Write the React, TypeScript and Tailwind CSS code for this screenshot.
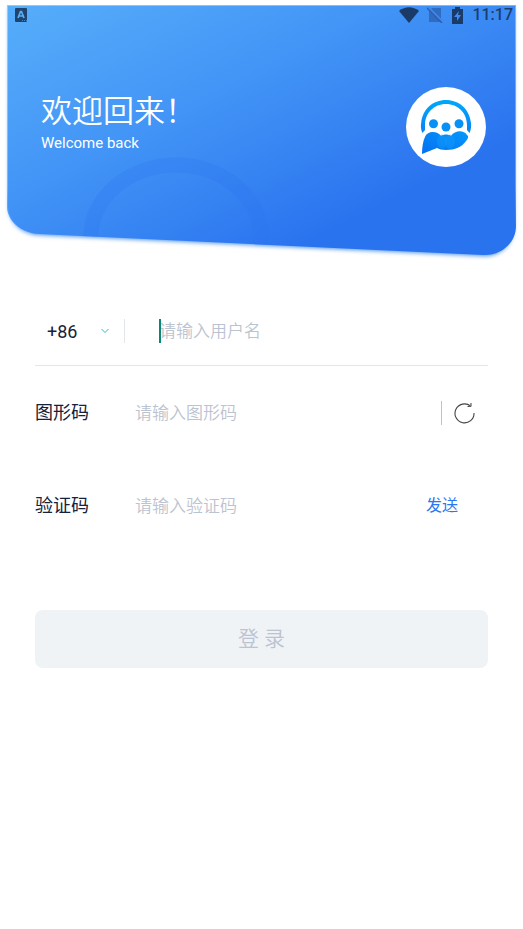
import { useState } from "react";

function HeaderShape() {
  return (
    <svg
      className="absolute inset-0 h-full w-full"
      viewBox="0 0 523 264"
      preserveAspectRatio="none"
      aria-hidden="true"
    >
      <defs>
        <linearGradient id="sky" gradientUnits="userSpaceOnUse" x1="7" y1="5" x2="165" y2="316">
          <stop offset="0" stopColor="#57aefa" />
          <stop offset="0.5" stopColor="#4294f6" />
          <stop offset="1" stopColor="#2a73ef" />
        </linearGradient>
        <linearGradient id="edge" gradientUnits="userSpaceOnUse" x1="0" y1="5" x2="0" y2="230">
          <stop offset="0" stopColor="#fff" stopOpacity="0.35" />
          <stop offset="0.8" stopColor="#fff" stopOpacity="0.3" />
          <stop offset="1" stopColor="#fff" stopOpacity="0" />
        </linearGradient>
        <filter id="glow" x="-5%" y="-5%" width="110%" height="112%">
          <feGaussianBlur stdDeviation="2" />
        </filter>
        <clipPath id="card">
          <path d="M7 5H516V226C516 243 501 256 483 255L39 234C21 233 7 221 7 206Z" />
        </clipPath>
      </defs>
      <path
        d="M9 7H514V226C514 243 501 257 483 256L39 235C21 234 9 222 9 207Z"
        fill="#4b93f8"
        filter="url(#glow)"
      />
      <path d="M0 0H523V5H0Z" fill="#fff" />
      <g clipPath="url(#card)">
        <path d="M0 0H523V264H0Z" fill="url(#sky)" />
        <ellipse cx="176" cy="237" rx="85" ry="72" fill="none" stroke="#2a73ef" strokeOpacity="0.25" strokeWidth="15" />
        <path
          d="M7 5H516V226C516 243 501 256 483 255L39 234C21 233 7 221 7 206Z"
          fill="none"
          stroke="url(#edge)"
          strokeWidth="2"
        />
      </g>
    </svg>
  );
}

function StatusBar() {
  return (
    <div className="relative flex h-[30px] items-center justify-between pr-[10px] pl-[15px] text-[#1c3d6e]">
      <svg width="13" height="14" viewBox="0 0 13 14" aria-hidden="true">
        <rect width="12" height="14" rx="1" fill="#1f446e" />
        <path d="M3 10L5.500 3.500H6.500L9 10M4 8H8" fill="none" stroke="#58aef8" strokeWidth="1.700" />
        <path d="M7 12.500H12" stroke="#58aef8" strokeOpacity="0.600" strokeDasharray="1 1" />
      </svg>
      <div className="flex items-center">
        <svg width="20" height="17" viewBox="0 0 20 17" aria-hidden="true">
          <path d="M0 4C6-1 14-1 20 4L10 16Z" fill="#1a3b68" />
        </svg>
        <svg className="ml-2" width="16" height="16" viewBox="0 0 16 16" aria-hidden="true">
          <path d="M5 1H14V15H2V4Z" fill="#2f6cc0" />
          <path d="M1 0L16 15" stroke="#3f87f1" strokeWidth="2" />
          <path d="M0 1L15 16" stroke="#2a60ab" strokeWidth="1.500" />
        </svg>
        <svg className="ml-2" width="13" height="17" viewBox="0 0 13 17" aria-hidden="true">
          <path d="M1 2H4V0H9V2H12V17H1Z" fill="#1a3b68" />
          <path d="M8 4L3 10H6V14L10 8H7Z" fill="#4088f3" />
        </svg>
        <time className="ml-2 font-['Roboto',sans-serif] text-base leading-5 font-medium">11:17</time>
      </div>
    </div>
  );
}

function Logo() {
  return (
    <svg className="mr-[37px] shrink-0" width="80" height="80" viewBox="0 0 80 80" role="img" aria-label="Logo">
      <defs>
        <linearGradient id="ring" x1="0" y1="0" x2="0" y2="1">
          <stop offset="0" stopColor="#00a8fb" />
          <stop offset="1" stopColor="#0784f5" />
        </linearGradient>
        <linearGradient id="body" x1="0" y1="1" x2="1" y2="0">
          <stop offset="0" stopColor="#0670f2" />
          <stop offset="1" stopColor="#0598fb" />
        </linearGradient>
      </defs>
      <circle cx="40" cy="40" r="40" fill="#fff" />
      <path
        d="M16.500 46C14.500 42 14.800 38 15.200 36C16.500 22 27 13 40 13S63.500 22 65 36C65.400 39 65 43 63.500 46L61 43V38C61 26 52 17 40 17S19 26 19 38V43Z"
        fill="url(#ring)"
      />
      <g fill="#0791f6">
        <circle cx="27.500" cy="36.800" r="4.500" />
        <circle cx="40" cy="40" r="4.500" />
        <circle cx="53" cy="36.800" r="4.500" />
      </g>
      <path
        d="M16 67C16 60 17 54 19 50C21 44 31 43 35 49C38 47 42 47 45 49C49 43 58 43 61 48C63 49 62 52 60 54C56 60 49 63 40 63C36 63 33 62 31 61C26 63 21 65 16 67Z"
        fill="url(#body)"
      />
      <ellipse cx="36" cy="54.500" rx="5" ry="7" fill="#139bfa" fillOpacity="0.450" />
      <ellipse cx="44" cy="54.500" rx="5" ry="7" fill="#139bfa" fillOpacity="0.450" />
    </svg>
  );
}

const fieldText =
  "min-w-0 flex-1 bg-transparent text-[17px] leading-6 font-[350] text-[#16213b] outline-none placeholder:text-[#bcc3d0]";

export default function App() {
  const [user, setUser] = useState("");
  const [captcha, setCaptcha] = useState("");
  const [code, setCode] = useState("");

  return (
    <main className="min-h-screen w-full bg-white pb-10 font-['Roboto','Noto_Sans_CJK_SC',sans-serif]">
      <header className="relative h-[264px]">
        <HeaderShape />
        <StatusBar />
        <div className="relative mt-[57px] flex items-start justify-between pl-[41px]">
          <div className="pt-1 text-white">
            <h1 className="text-[31px] leading-[42px] font-[350]">欢迎回来！</h1>
            <p className="text-[15px] leading-5">Welcome back</p>
          </div>
          <Logo />
        </div>
      </header>

      <form className="px-[35px] pt-[33px]" onSubmit={(e) => e.preventDefault()}>
        <div className="flex h-[69px] items-center border-b border-[#e4e6e8]">
          <div className="relative flex h-6 w-[90px] items-center border-r border-[#e4e7ea]">
            <select
              aria-label="国家区号"
              className="w-full appearance-none bg-transparent pt-[2px] pl-3 text-[18px] leading-6 text-[#16213b] outline-none"
            >
              <option>+86</option>
            </select>
            <svg
              className="pointer-events-none absolute right-[15px]"
              width="8"
              height="6"
              viewBox="0 0 8 6"
              aria-hidden="true"
            >
              <path d="M0.500 1L4 4.500L7.500 1" fill="none" stroke="#35b8c8" />
            </svg>
          </div>
          <div className="relative ml-[34px] flex h-6 flex-1 items-center">
            <span className="absolute left-0 h-6 w-[2px] bg-[#07897a]" aria-hidden="true" />
            <input
              aria-label="用户名"
              className={fieldText}
              placeholder="请输入用户名"
              value={user}
              onChange={(e) => setUser(e.target.value)}
            />
          </div>
        </div>

        <div className="flex h-[93px] items-center">
          <label htmlFor="captcha" className="w-[100px] text-[18px] leading-6 text-[#16213b]">
            图形码
          </label>
          <input
            id="captcha"
            className={fieldText}
            placeholder="请输入图形码"
            value={captcha}
            onChange={(e) => setCaptcha(e.target.value)}
          />
          <div className="flex h-6 items-center border-l border-[#bfc1c4] pr-3 pl-3">
            <button type="button" aria-label="刷新图形码">
              <svg width="22" height="22" viewBox="0 0 22 22" fill="none" stroke="#444" aria-hidden="true">
                <path d="M20 11A9.500 9.500 0 1 1 16.500 4" strokeWidth="1.100" />
                <path d="M17 1V4.500H13.500" strokeWidth="1" />
                <path d="M17 2L14.500 4.500H17Z" fill="#777" stroke="none" />
              </svg>
            </button>
          </div>
        </div>

        <div className="flex h-[93px] items-center">
          <label htmlFor="code" className="w-[100px] text-[18px] leading-6 text-[#16213b]">
            验证码
          </label>
          <input
            id="code"
            className={fieldText}
            placeholder="请输入验证码"
            value={code}
            onChange={(e) => setCode(e.target.value)}
          />
          <button type="button" className="mr-[30px] text-base leading-6 text-[#2a77f3]">
            发送
          </button>
        </div>

        <button
          type="submit"
          className="mt-[58px] h-[58px] w-full rounded-lg bg-[#eff3f6] pt-[2px] text-[21px] font-[350] text-[#bcc3d0]"
        >
          登 录
        </button>
      </form>
    </main>
  );
}
